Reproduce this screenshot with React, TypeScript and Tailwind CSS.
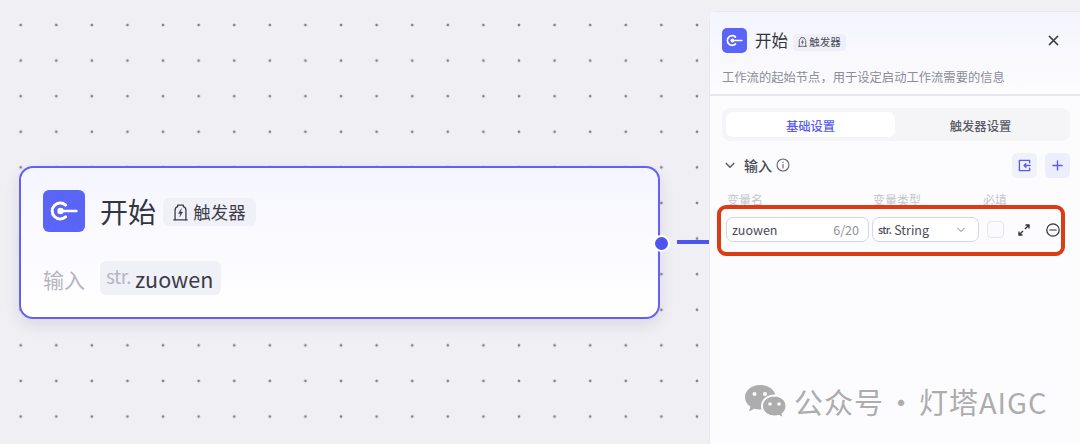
const font = "[font-family:'Noto_Sans_CJK_SC','Noto_Sans',sans-serif]";

function StartIcon({ className }: { className: string }) {
  return (
    <div className={`flex shrink-0 items-center justify-center bg-[#5a64f6] ${className}`}>
      <svg viewBox="0 0 42 42" className="h-full w-full" fill="none" stroke="#fff" strokeLinecap="round">
        <path d="M22.600 15.100a8 8 0 1 0 0 11.800" strokeWidth="3" />
        <path d="M18 21h15.500" strokeWidth="2.400" />
        <circle cx="17.500" cy="21" r="3.200" fill="#fff" stroke="none" />
      </svg>
    </div>
  );
}

function Trigger({ className }: { className: string }) {
  return (
    <svg viewBox="0 0 16 18" className={className} fill="none" stroke="currentColor" strokeWidth="1.4" strokeLinejoin="round" strokeLinecap="round">
      <path d="M0.800 16.800h14.400" />
      <path d="M2.200 16.800V6.500a3.800 3.800 0 0 1 2.800-3.700V1.200h6v1.600a3.800 3.800 0 0 1 2.800 3.700v10.300" />
      <path d="M8.800 5.200 5.800 10h2.300l-.9 3.500 3.100-5H7.900z" fill="currentColor" strokeWidth="0.500" />
    </svg>
  );
}

function Node() {
  return (
    <div className="absolute left-[19px] top-[166px] flex h-[153px] w-[641px] flex-col rounded-[14px] border-2 border-[#625ffb] bg-gradient-to-b from-[#f5f5fe] to-white pl-[22px] pt-[22px] shadow-[0_6px_16px_rgba(30,30,60,0.1)]">
      <div className="flex items-center">
        <StartIcon className="h-[42px] w-[42px] rounded-[6px]" />
        <span className="ml-[15px] text-[28px] leading-[42px] text-[#33343f]">开始</span>
        <span className="ml-[7px] mt-[2px] flex h-[28px] w-[93px] items-center justify-center gap-[5px] rounded-[6px] bg-[#eff0f8] text-[17.500px] text-[#3d3e4a]">
          <Trigger className="h-[17px] w-[15px]" />
          触发器
        </span>
      </div>
      <div className="mt-[29px] flex h-[34px] items-center">
        <span className="w-[57px] pt-[2px] text-[21px] leading-[34px] text-[#b4b6c2]">输入</span>
        <span className="flex h-[34px] w-[121px] items-center rounded-[6px] bg-[#f0f1f7] pl-[6px]">
          <span className="mb-[4px] text-[19px] tracking-[-0.5px] text-[#b3b6c3]">str.</span>
          <span className="ml-[4px] mt-[3px] text-[21.500px] text-[#3b3c48]">zuowen</span>
        </span>
      </div>
      <span className="absolute left-[632px] top-[67px] h-[17px] w-[17px] rounded-full border-2 border-white bg-[#4c55ee]" />
    </div>
  );
}

function Panel() {
  return (
    <aside className="mt-[11px] flex h-[433px] w-[371px] shrink-0 flex-col rounded-tl-[10px] border-l border-t border-[#e8e8ee] bg-[#fcfcfe]">
      <header className="h-[84px] border-b-2 border-[#e6e6ee] bg-gradient-to-b from-[#f4f4fd] to-[#fcfcfe] pl-[12px] pr-[20px] pt-[16px]">
        <div className="flex items-center">
          <StartIcon className="h-[25px] w-[25px] rounded-[5px]" />
          <span className="ml-[8px] text-[16.5px] leading-[25px] text-[#34353f]">开始</span>
          <span className="ml-[5px] mt-[3px] flex h-[17px] w-[53px] items-center justify-center gap-[2px] rounded-[4px] bg-[#eeeff8] text-[10.5px] text-[#4a4b57]">
            <Trigger className="h-[10px] w-[9px]" />
            触发器
          </span>
          <svg viewBox="0 0 12 12" className="ml-auto mr-[1px] h-[11px] w-[11px]" stroke="#3f404b" strokeWidth="1.6" strokeLinecap="round">
            <path d="M1.5 1.5l9 9M10.5 1.5l-9 9" />
          </svg>
        </div>
        <p className="mt-[15px] text-[12.3px] leading-[18px] text-[#8b8d99]">{"工作流的起始节点\uFF0C用于设定启动工作流需要的信息"}</p>
      </header>

      <div className="relative flex flex-col px-[12px] pt-[12px]">
        <div className="flex h-[33px] w-[348px] rounded-[8px] bg-[#f5f5f7] p-[4px] text-[12.3px] font-medium">
          <span className="flex w-[169px] items-center justify-center rounded-[7px] bg-white pt-[3px] text-[#5a5cf0]">基础设置</span>
          <span className="flex flex-1 items-center justify-center pt-[3px] text-[#5a5b66]">触发器设置</span>
        </div>

        <div className="mt-[11px] flex h-[26px] w-[348px] items-center">
          <svg viewBox="0 0 12 8" className="ml-[3px] h-[7px] w-[10px]" fill="none" stroke="#5c5d69" strokeWidth="1.8" strokeLinecap="round" strokeLinejoin="round">
            <path d="M1.5 1.5 6 6l4.5-4.5" />
          </svg>
          <span className="ml-[9px] text-[14px] font-medium text-[#4a4b57]">输入</span>
          <svg viewBox="0 0 14 14" className="ml-[4px] h-[14px] w-[14px]" fill="none" stroke="#62636f" strokeWidth="1.1" strokeLinecap="round">
            <circle cx="7" cy="7" r="6" />
            <path d="M7 6.3v3.6M7 4.1v.3" />
          </svg>
          <span className="ml-auto flex h-[25px] w-[25px] items-center justify-center rounded-[5px] bg-[#f1f1f9]">
            <svg viewBox="0 0 14 14" className="h-[13px] w-[13px]" fill="none" stroke="#5a5cf0" strokeWidth="1.5" strokeLinecap="round" strokeLinejoin="round">
              <path d="M12.5 4V1.5h-11v11h11V10M13 7H6.500M8.500 5 6.500 7l2 2" />
            </svg>
          </span>
          <span className="ml-[8px] flex h-[25px] w-[25px] items-center justify-center rounded-[5px] bg-[#ecedfd]">
            <svg viewBox="0 0 12 12" className="h-[11px] w-[11px]" stroke="#5a5cf0" strokeWidth="1.5" strokeLinecap="round">
              <path d="M6 1v10M1 6h10" />
            </svg>
          </span>
        </div>

        <div className="mt-[14px] flex h-[16px] items-center text-[12px] text-[#c3c5cf]">
          <span className="ml-[5px] w-[146px]">变量名</span>
          <span className="w-[110px]">变量类型</span>
          <span>必填</span>
        </div>

        <div className="mt-[9px] flex items-center">
          <div className="ml-[4px] flex h-[25px] w-[143px] items-center justify-between rounded-[7px] border border-[#d6d7e3] bg-white pl-[5px] pr-[9px] pt-[1px] text-[12.500px]">
            <span className="text-[#4a4b57]">zuowen</span>
            <span className="text-[#8e909b]">6/20</span>
          </div>
          <div className="ml-[3px] flex h-[25px] w-[107px] items-center rounded-[7px] border border-[#d6d7e3] bg-white pl-[5px] pt-[1px] text-[12.500px] text-[#4a4b57]">
            <span className="text-[10.500px] font-medium tracking-[-0.6px]">str.</span>
            <span className="ml-[3px]">String</span>
            <svg viewBox="0 0 12 8" className="ml-auto mr-[12px] h-[6px] w-[10px]" fill="none" stroke="#6c6d78" strokeWidth="1.2" strokeLinecap="round" strokeLinejoin="round">
              <path d="M1.5 1.5 6 6l4.5-4.5" />
            </svg>
          </div>
          <span className="ml-[8px] h-[17px] w-[17px] rounded-[4px] border border-[#e4e5ee] bg-[#fbfbfe]" />
          <svg viewBox="0 0 12 12" className="ml-[14px] h-[12px] w-[12px]" fill="none" stroke="#2f3039" strokeWidth="1.3">
            <path d="M7 5l4-4M7.5 1H11v3.5M5 7l-4 4M4.5 11H1V7.500" />
          </svg>
          <svg viewBox="0 0 14 14" className="ml-[16px] h-[14px] w-[14px]" fill="none" stroke="#2f3039" strokeWidth="1.2" strokeLinecap="round">
            <circle cx="7" cy="7" r="6.200" />
            <path d="M3.800 7h6.400" />
          </svg>
        </div>

        <div className="absolute left-[7px] top-[109px] h-[51px] w-[348px] rounded-[9px] border-4 border-[#dc3c14]" />
      </div>
    </aside>
  );
}

function Watermark() {
  return (
    <div className="absolute left-[744px] top-[383px] flex items-center text-[#adadad]">
      <svg viewBox="0 0 42 34" className="h-[34px] w-[42px]" fill="#adadad">
        <path d="M16 1C7.700 1 1 6.500 1 13.300c0 3.800 2.100 7.200 5.400 9.400L5 27.500l5.300-2.800c1.800.5 3.700.8 5.700.8.500 0 1 0 1.500-.1A11 11 0 0 1 17 22c0-6.400 6-11.500 13.500-11.500h.8C29.700 5 23.500 1 16 1z" />
        <path d="M30.500 12C24 12 18.500 16.400 18.500 22s5.500 10 12 10c1.500 0 3-.2 4.300-.7l4.200 2.200-1.100-3.800c2.500-1.800 4.100-4.600 4.100-7.700 0-5.600-5.500-10-12-10z" stroke="#fcfcfe" strokeWidth="1" />
        <circle cx="10.500" cy="10" r="2" fill="#fcfcfe" />
        <circle cx="21" cy="10" r="2" fill="#fcfcfe" />
        <circle cx="26" cy="20" r="1.800" fill="#fcfcfe" />
        <circle cx="35" cy="20" r="1.800" fill="#fcfcfe" />
      </svg>
      <span className="ml-[8px] whitespace-pre text-[29px] leading-[36px] tracking-[1px] [word-spacing:-5px]">公众号 · 灯塔AIGC</span>
    </div>
  );
}

export default function App() {
  return (
    <div className={`relative flex h-[444px] w-[1080px] overflow-hidden bg-[#efeff4] ${font}`}>
      <main className="relative h-full w-[709px] shrink-0 bg-[radial-gradient(circle,#808087_1.1px,transparent_1.7px)] bg-size-[35.6px_35.6px] bg-position-[2.9px_7.2px]">
        <Node />
        <div className="absolute left-[677px] top-[240px] h-[4px] w-[32px] bg-[#4c55ee]" />
      </main>
      <Panel />
      <Watermark />
    </div>
  );
}
